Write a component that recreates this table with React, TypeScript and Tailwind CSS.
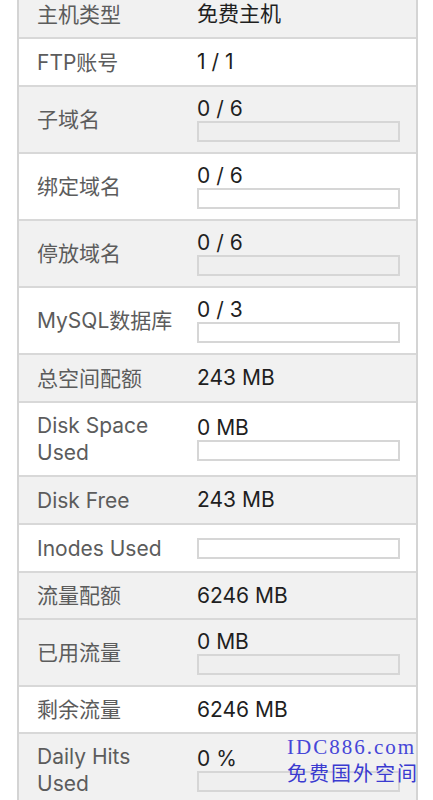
import React from "react";

type Row = {
  label: string[];
  value?: string;
  bar?: boolean;
  gray: boolean;
  h: string;
};

const rows: Row[] = [
  { label: ["主机类型"], value: "免费主机", gray: true, h: "h-[48px]" },
  { label: ["FTP账号"], value: "1 / 1", gray: false, h: "h-[48px]" },
  { label: ["子域名"], value: "0 / 6", bar: true, gray: true, h: "h-[67px]" },
  { label: ["绑定域名"], value: "0 / 6", bar: true, gray: false, h: "h-[67px]" },
  { label: ["停放域名"], value: "0 / 6", bar: true, gray: true, h: "h-[67px]" },
  { label: ["MySQL数据库"], value: "0 / 3", bar: true, gray: false, h: "h-[67px]" },
  { label: ["总空间配额"], value: "243 MB", gray: true, h: "h-[48px]" },
  { label: ["Disk Space", "Used"], value: "0 MB", bar: true, gray: false, h: "h-[74px]" },
  { label: ["Disk Free"], value: "243 MB", gray: true, h: "h-[48px]" },
  { label: ["Inodes Used"], bar: true, gray: false, h: "h-[48px]" },
  { label: ["流量配额"], value: "6246 MB", gray: true, h: "h-[47px]" },
  { label: ["已用流量"], value: "0 MB", bar: true, gray: true, h: "h-[67px]" },
  { label: ["剩余流量"], value: "6246 MB", gray: false, h: "h-[47px]" },
  { label: ["Daily Hits", "Used"], value: "0 %", bar: true, gray: true, h: "h-[74px]" },
];

export default function App() {
  return (
    <div
      className="relative w-[433px] h-[800px] overflow-hidden bg-white"
      style={{ fontFamily: 'Inter, "Noto Sans CJK SC", sans-serif' }}
    >
      <div className="ml-[17px] mt-[-9px] w-[401px] border-l-2 border-r-2 border-[#d4d4d4]">
        {rows.map((r, i) => (
          <div
            key={i}
            className={`flex items-center border-b-2 border-[#d8d8d8] box-border ${r.h} ${
              r.gray ? "bg-[#f1f1f1]" : "bg-white"
            }`}
          >
            <div className="w-[178px] shrink-0 pl-[18px] text-[21px] leading-[27px] text-[#5c5c5c] whitespace-nowrap">
              {r.label.map((l, j) => (
                <React.Fragment key={j}>
                  {j > 0 && <br />}
                  {l}
                </React.Fragment>
              ))}
            </div>
            <div className="flex flex-col">
              {r.value && (
                <div className="text-[21px] leading-[22px] text-[#1f1f1f] whitespace-nowrap">
                  {r.value}
                </div>
              )}
              {r.bar && (
                <div
                  className={`w-[203px] h-[21px] border-2 border-[#d6d6d6] ${
                    r.value ? "mt-[1px]" : ""
                  } ${r.gray ? "bg-[#efefef]" : "bg-white"}`}
                />
              )}
            </div>
          </div>
        ))}
      </div>
      <div className="absolute left-[287px] top-[736px] flex flex-col items-start">
        <div
          className="text-[21px] leading-[22px] text-[#4646d8] tracking-[2px]"
          style={{ fontFamily: '"Liberation Serif", serif' }}
        >
          IDC886.com
        </div>
        <div
          className="mt-[2px] text-[20px] leading-[26px] text-[#3a3ad0] tracking-[2px]"
          style={{ fontFamily: '"Noto Sans CJK SC", sans-serif' }}
        >
          免费国外空间
        </div>
      </div>
    </div>
  );
}
